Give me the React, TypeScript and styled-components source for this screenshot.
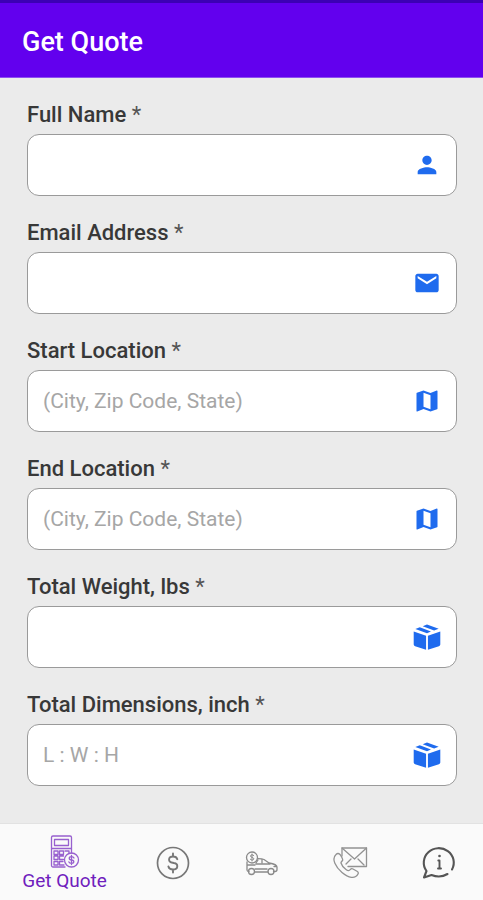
import React from "react";
import styled, { createGlobalStyle } from "styled-components";

const GlobalStyle = createGlobalStyle`
  * { box-sizing: border-box; }
  body {
    margin: 0;
    background: #ebebeb;
    font-family: Roboto, "Liberation Sans", sans-serif;
  }
`;

const Screen = styled.div`
  min-height: 100vh;
  display: flex;
  flex-direction: column;
  background: #ebebeb;
`;

const Header = styled.header`
  display: flex;
  align-items: center;
  height: 78px;
  padding: 4px 22px 0;
  background: #6200ee;
  border-top: 3px solid #3c00b4;
  border-bottom: 1px solid #8d4ff0;
`;

const Title = styled.h1`
  margin: 0;
  color: #fff;
  font-size: 27px;
  font-weight: 500;
  line-height: 32px;
`;

const Form = styled.form`
  flex: 1;
  display: flex;
  flex-direction: column;
  gap: 25px;
  padding: 25px 26px 36px 27px;
`;

const Field = styled.div`
  display: flex;
  flex-direction: column;
  gap: 7px;
`;

const Label = styled.label`
  color: #383838;
  font-size: 22px;
  font-weight: 500;
  line-height: 24px;
`;

const Star = styled.span`
  color: #555;
  font-weight: 400;
`;

const InputBox = styled.div`
  display: flex;
  align-items: center;
  height: 62px;
  padding: 0 15px;
  background: #fff;
  border: 1px solid #9a9a9a;
  border-radius: 12px;
  color: #1f6bee;

  &:focus-within { border-color: #6200ee; }
`;

const Input = styled.input`
  flex: 1;
  min-width: 0;
  height: 100%;
  padding: 0;
  border: 0;
  outline: 0;
  background: transparent;
  color: #333;
  font: 400 21px Roboto, "Liberation Sans", sans-serif;

  &::placeholder { color: #a6a6a6; opacity: 1; }
`;

const FieldIcon = styled.svg`
  flex: none;
  width: 28px;
  height: 28px;
  fill: currentColor;
`;

const Nav = styled.nav`
  display: grid;
  grid-template-columns: 129px repeat(4, 1fr);
  height: 77px;
  background: #fafafa;
  border-top: 1px solid #e2e2e2;
`;

const NavButton = styled.button<{ $active?: boolean }>`
  display: flex;
  flex-direction: column;
  align-items: center;
  justify-content: center;
  min-width: 0;
  padding: 2px 0 0;
  border: 0;
  background: transparent;
  color: ${(p) => (p.$active ? "#6f20bd" : "#777")};
  font: 400 19px/22px Roboto, "Liberation Sans", sans-serif;
  cursor: pointer;
`;

const NavIcon = styled.svg`
  width: 36px;
  height: 36px;
  fill: none;
  stroke: currentColor;
  stroke-width: 1.3;
  stroke-linecap: round;
  stroke-linejoin: round;
`;

type IconName = "person" | "mail" | "map" | "box";

const shapes: Record<IconName, React.ReactNode> = {
  person: (
    <path d="M12 12c2.21 0 4-1.79 4-4s-1.79-4-4-4-4 1.79-4 4 1.79 4 4 4zm0 2c-2.67 0-8 1.34-8 4v2h16v-2c0-2.66-5.33-4-8-4z" />
  ),
  mail: (
    <path d="M20 4H4c-1.1 0-2 .9-2 2v12c0 1.1.9 2 2 2h16c1.1 0 2-.9 2-2V6c0-1.1-.9-2-2-2zm0 4l-8 5-8-5V6l8 5 8-5v2z" />
  ),
  map: (
    <path d="M20.5 3l-.16.03L15 5.1 9 3 3.36 4.9c-.21.07-.36.25-.36.48V20.5c0 .28.22.5.5.5l.16-.03L9 18.9l6 2.1 5.64-1.9c.21-.07.36-.25.36-.48V3.5c0-.28-.22-.5-.5-.5zM15 19l-6-2.11V5l6 2.11V19z" />
  ),
  box: (
    <>
      <path d="M.6 7.2 11.2 10.900v12L1.800 19.900A1.500 1.500 0 0 1 .6 18.500z" />
      <path d="M23.400 7.200 12.800 10.900v12l9.400-3a1.500 1.500 0 0 0 1.200-1.400z" />
      <path d="m2 5.200 3.800-1.500 9.600 3.500L12 8.800z" />
      <path d="m8.300 2.700 3.700-1.500 10 3.800-3.900 1.400z" />
    </>
  ),
};

const fields: { id: string; label: string; icon: IconName; placeholder?: string; type?: string }[] = [
  { id: "name", label: "Full Name", icon: "person" },
  { id: "email", label: "Email Address", icon: "mail", type: "email" },
  { id: "start", label: "Start Location", icon: "map", placeholder: "(City, Zip Code, State)" },
  { id: "end", label: "End Location", icon: "map", placeholder: "(City, Zip Code, State)" },
  { id: "weight", label: "Total Weight, lbs", icon: "box" },
  { id: "dimensions", label: "Total Dimensions, inch", icon: "box", placeholder: "L : W : H" },
];

const CalculatorIcon = () => (
  <NavIcon viewBox="0 0 36 36" aria-hidden="true" opacity="0.7">
    <path d="M18 33H6a1.500 1.500 0 0 1-1.500-1.500v-28A1.500 1.500 0 0 1 6 2h17a1.500 1.500 0 0 1 1.500 1.500V19" />
    <path d="M7.500 5.500h14v6h-14z" />
    <path d="M5 14.500h19M7 17h4v3.500H7zM12.500 17h4v3.500h-4zM18 17h4v2.500M7 22h4v3.500H7zM16.500 22h-4v3.500h4M7 27.500h4V31H7zM16 27.500h-3.500V31H17" />
    <circle cx="24.500" cy="26" r="7" />
    <path d="M27 24c-.5-1-1.300-1.300-2.500-1.300-3 0-3 3.100 0 3.300 3.100.2 3 3.300 0 3.300-1.300 0-2.200-.4-2.600-1.400M24.500 21.500v9" />
  </NavIcon>
);

const DollarIcon = () => (
  <NavIcon viewBox="0 0 36 36" aria-hidden="true">
    <circle cx="18" cy="18" r="15.500" strokeWidth="1.700" />
    <path d="M22.300 14.200c-.5-1.800-2-2.700-4.300-2.700-5 0-5.400 5.600-.2 6.300l1 .2c5 .8 4.500 6.500-.8 6.500-2.500 0-4.100-1-4.600-3M18 8.500v3M18 24.500v3" strokeWidth="1.900" />
  </NavIcon>
);

const CarIcon = () => (
  <NavIcon viewBox="0 0 36 36" aria-hidden="true" color="#8a8a8a">
    <circle cx="8" cy="12.500" r="5.500" />
    <path d="M9.800 10.500c-1-1.200-3.300-.9-3.300.6 0 1.600 3.300 1 3.300 2.700 0 1.500-2.500 1.700-3.500.5M8 9v7" strokeWidth="1" />
    <path d="M3 17v8c0 1 .5 1.500 2 1.500M10.500 27H24M29.500 26.500H31c1.300 0 2-.6 2-2V22c0-2-2-3-8-4l-5-3.500c-2-.8-4-.8-6-.8M12 19h14M4 20h7M30 21.500h2" />
    <path d="m12 18 2-3M18 14.500V18" />
    <circle cx="7.500" cy="26.500" r="3" />
    <circle cx="27" cy="26.500" r="3" />
    <path d="M11 24h12" />
  </NavIcon>
);

const ContactIcon = () => (
  <NavIcon viewBox="0 0 36 36" aria-hidden="true" color="#929292">
    <path d="M10 11V3h24.500v18.500H16" />
    <path d="m10 3 12.500 11 12-11M14 19l5-5M26 14l6 6" />
    <path d="M4 9.500c-5 4.500 0 13 6 18 6.500 5.300 13 7 16 1.500.7-1.300.2-2-1-2.700l-4-2.300c-1.300-.7-2-.3-2.800.7-1.200 1.500-2.200 1.300-4.200-.2-3-2.300-4.500-4.500-5-6.500-.3-1.200 1.500-2 1.700-3 .1-1-1.700-4.500-2.700-5.500-1.200-1.200-2.700-1.300-4 0z" />
  </NavIcon>
);

const InfoIcon = () => (
  <NavIcon viewBox="0 0 36 36" aria-hidden="true" color="#555">
    <path d="M31 24.500A15 14.500 0 1 0 5.500 26L3 32.500l7.500-2.500c5 2 11 2 16-1" strokeWidth="2.100" />
    <path d="M18.500 15.500v8M17.300 15.500h1.200M17 23.500h3" strokeWidth="1.900" />
    <circle cx="18.500" cy="11" r="1.300" fill="currentColor" stroke="none" />
  </NavIcon>
);

export default function App() {
  return (
    <Screen>
      <GlobalStyle />
      <Header>
        <Title>Get Quote</Title>
      </Header>
      <Form>
        {fields.map((f) => (
          <Field key={f.id}>
            <Label htmlFor={f.id}>
              {f.label} <Star>*</Star>
            </Label>
            <InputBox>
              <Input id={f.id} type={f.type ?? "text"} placeholder={f.placeholder} required />
              <FieldIcon viewBox="0 0 24 24" aria-hidden="true">
                {shapes[f.icon]}
              </FieldIcon>
            </InputBox>
          </Field>
        ))}
      </Form>
      <Nav aria-label="Main">
        <NavButton type="button" $active aria-current="page">
          <CalculatorIcon />
          Get Quote
        </NavButton>
        <NavButton type="button" aria-label="Pricing">
          <DollarIcon />
        </NavButton>
        <NavButton type="button" aria-label="Vehicles">
          <CarIcon />
        </NavButton>
        <NavButton type="button" aria-label="Contact">
          <ContactIcon />
        </NavButton>
        <NavButton type="button" aria-label="Information">
          <InfoIcon />
        </NavButton>
      </Nav>
    </Screen>
  );
}
